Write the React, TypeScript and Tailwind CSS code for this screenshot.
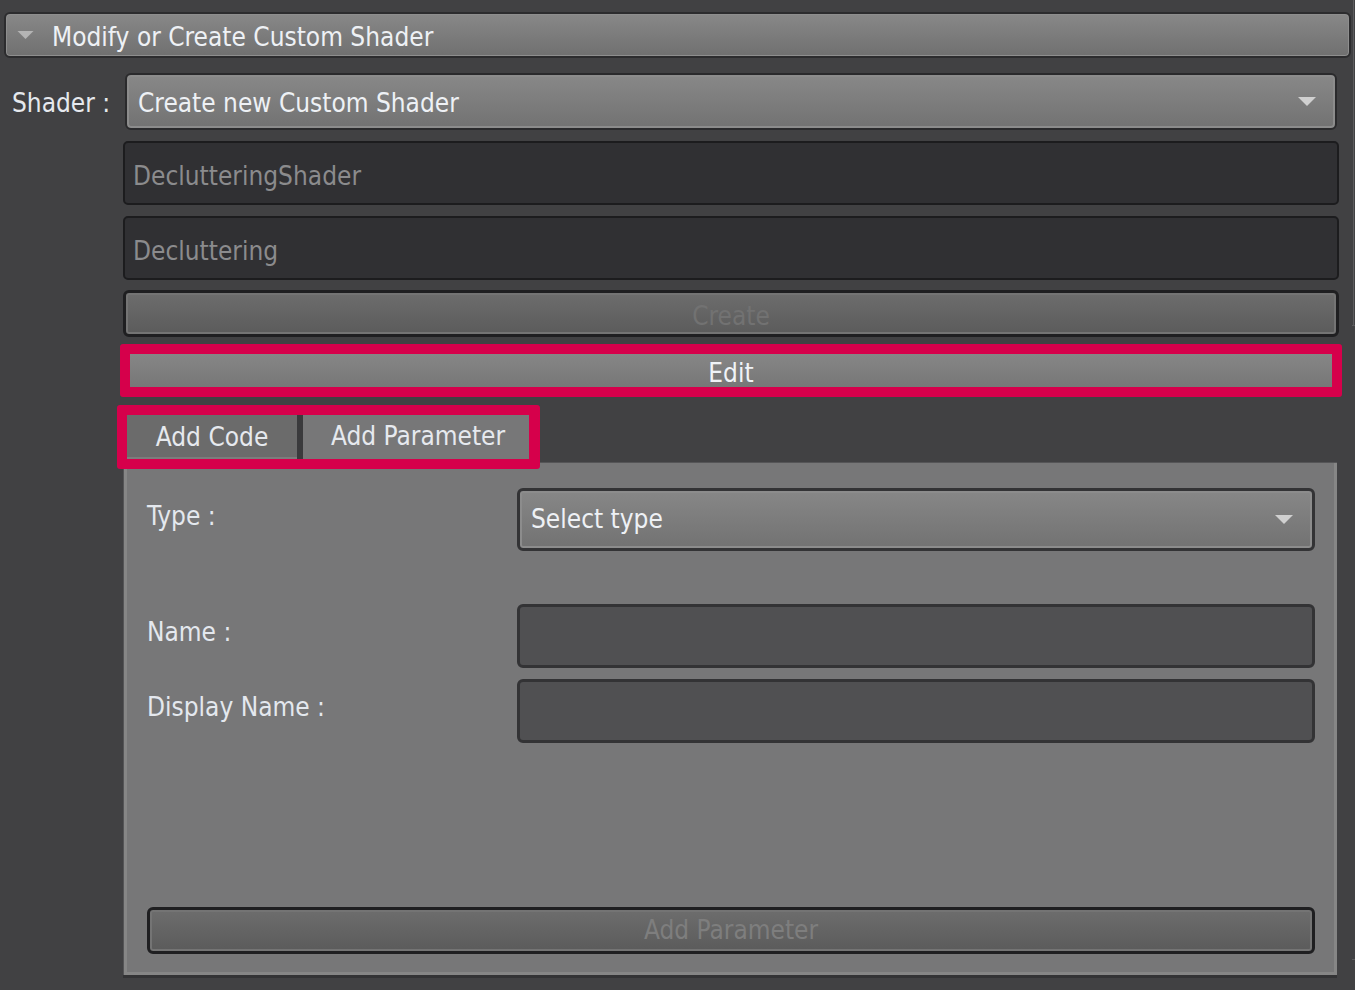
import React from 'react';

const FONT = "font-['DejaVu_Sans_Condensed','DejaVu_Sans','Noto_Sans',sans-serif]";

const Caret: React.FC<{ className?: string }> = ({ className }) => (
  <svg className={className} width="18" height="9" viewBox="0 0 18 9">
    <path d="M0 0 H18 L9 9 Z" fill="currentColor" />
  </svg>
);

const DarkInput: React.FC<{ value: string }> = ({ value }) => (
  <div className="h-[64px] rounded-[5px] border-2 border-[#1c1c1e] bg-[#303033] flex items-center pl-[8px] pt-[6px] text-[26px] text-[#8b8b8d]">
    {value}
  </div>
);

const FieldRow: React.FC<{ label: string; children: React.ReactNode }> = ({ label, children }) => (
  <div className="flex items-center">
    <div className="w-[370px] -mt-[7px] text-[26px] text-[#e4e8ee]">{label}</div>
    <div className="flex-1">{children}</div>
  </div>
);

const App: React.FC = () => {
  return (
    <div className={`relative w-[1355px] h-[990px] overflow-hidden bg-[#414143] ${FONT}`}>
      {/* thin right edge */}
      <div className="absolute right-[1px] top-0 h-[325px] w-px bg-[#5c5c5e]" />
      <div className="absolute right-0 top-[325px] h-px w-[3px] bg-[#5c5c5e]" />
      <div className="absolute right-0 top-[959px] h-px w-[3px] bg-[#5c5c5e]" />

      {/* section header */}
      <div className="mx-[4px] mt-[12px] h-[46px] rounded-[6px] border-2 border-[#2c2c2e] bg-gradient-to-b from-[#888888] to-[#707070] shadow-[inset_0_0_0_1px_#8e8e8e] flex items-center">
        <Caret className="ml-[11px] mr-[18px] text-[#b4b4b4] w-[17px] h-[8px]" />
        <span className="text-[26px] text-[#eef1f5] leading-none mt-[4px]">Modify or Create Custom Shader</span>
      </div>

      {/* shader row */}
      <div className="flex items-center mt-[15px]">
        <div className="w-[125px] pl-[12px] pt-[4px] text-[26px] text-[#e6e9ee]">Shader :</div>
        <div className="w-[1212px] h-[57px] rounded-[6px] border-2 border-[#2a2a2c] bg-gradient-to-b from-[#888888] to-[#727272] shadow-[inset_0_0_0_2px_#8c8c8c] flex items-center justify-between pl-[11px] pr-[19px]">
          <span className="text-[26px] text-[#eef1f5] mt-[4px]">Create new Custom Shader</span>
          <Caret className="text-[#d0d0d0]" />
        </div>
      </div>

      <div className="ml-[123px] w-[1216px] flex flex-col">
        <div className="mt-[11px]">
          <DarkInput value="DeclutteringShader" />
        </div>
        <div className="mt-[11px]">
          <DarkInput value="Decluttering" />
        </div>

        {/* create (disabled) */}
        <div className="mt-[10px] h-[47px] rounded-[6px] border-[3px] border-[#1f1f21] bg-gradient-to-b from-[#6d6d6d] to-[#5b5b5b] shadow-[inset_0_0_0_2px_#747474] flex items-center justify-center pt-[6px] text-[26px] text-[#727272]">
          Create
        </div>

        {/* edit, highlighted */}
        <div className="mt-[7px] -mx-[3px] h-[53px] rounded-[3px] border-[10px] border-[#d6004b] bg-gradient-to-b from-[#868686] to-[#777777] flex items-center justify-center text-[26px] text-[#f0f3f7] leading-none">
          <span className="mt-[4px]">Edit</span>
        </div>

        {/* tabs */}
        <div className="mt-[8px] -ml-[6px] w-[423px] h-[64px] rounded-[3px] border-[10px] border-[#d6004b] border-r-[11px] flex relative z-10">
          <div className="w-[170px] h-full bg-[#6b6b6b] border-b-2 border-[#7c7c7c] flex items-center justify-center text-[26px] text-[#e6e9ee]">
            <span className="mt-[3px]">Add Code</span>
          </div>
          <div className="w-[6px] h-full bg-[#3a3a3c]" />
          <div className="flex-1 h-full bg-[#777778] flex items-center justify-center pl-[4px] text-[26px] text-[#e6e9ee]">
            <span className="-mt-[2px]">Add Parameter</span>
          </div>
        </div>

        {/* tab panel */}
        <div className="-mt-[7px] w-[1214px] h-[513px] border-l border-t border-[#555557] bg-[#777778] shadow-[inset_3px_0_0_#868686,inset_0_-3px_0_#868686,inset_-3px_0_0_#868686,0_3px_0_#333335] flex flex-col pl-[23px] pr-[22px] pt-[25px]">
          <FieldRow label="Type :">
            <div className="h-[63px] rounded-[6px] border-[3px] border-[#333335] bg-gradient-to-b from-[#878787] to-[#727272] shadow-[inset_0_0_0_2px_#8c8c8c] flex items-center justify-between pl-[11px] pr-[19px]">
              <span className="text-[26px] text-[#eef1f5]">Select type</span>
              <Caret className="text-[#d0d0d0]" />
            </div>
          </FieldRow>
          <div className="mt-[53px]">
            <FieldRow label="Name :">
              <div className="h-[64px] rounded-[6px] border-[3px] border-[#333335] bg-[#505052]" />
            </FieldRow>
          </div>
          <div className="mt-[11px]">
            <FieldRow label="Display Name :">
              <div className="h-[64px] rounded-[6px] border-[3px] border-[#333335] bg-[#505052]" />
            </FieldRow>
          </div>
          <div className="mt-[164px] h-[47px] rounded-[6px] border-[3px] border-[#1f1f21] bg-gradient-to-b from-[#6d6d6d] to-[#5b5b5b] shadow-[inset_0_0_0_2px_#747474] flex items-center justify-center text-[26px] text-[#7e7e7e]">
            Add Parameter
          </div>
        </div>
      </div>
    </div>
  );
};

export default App;
